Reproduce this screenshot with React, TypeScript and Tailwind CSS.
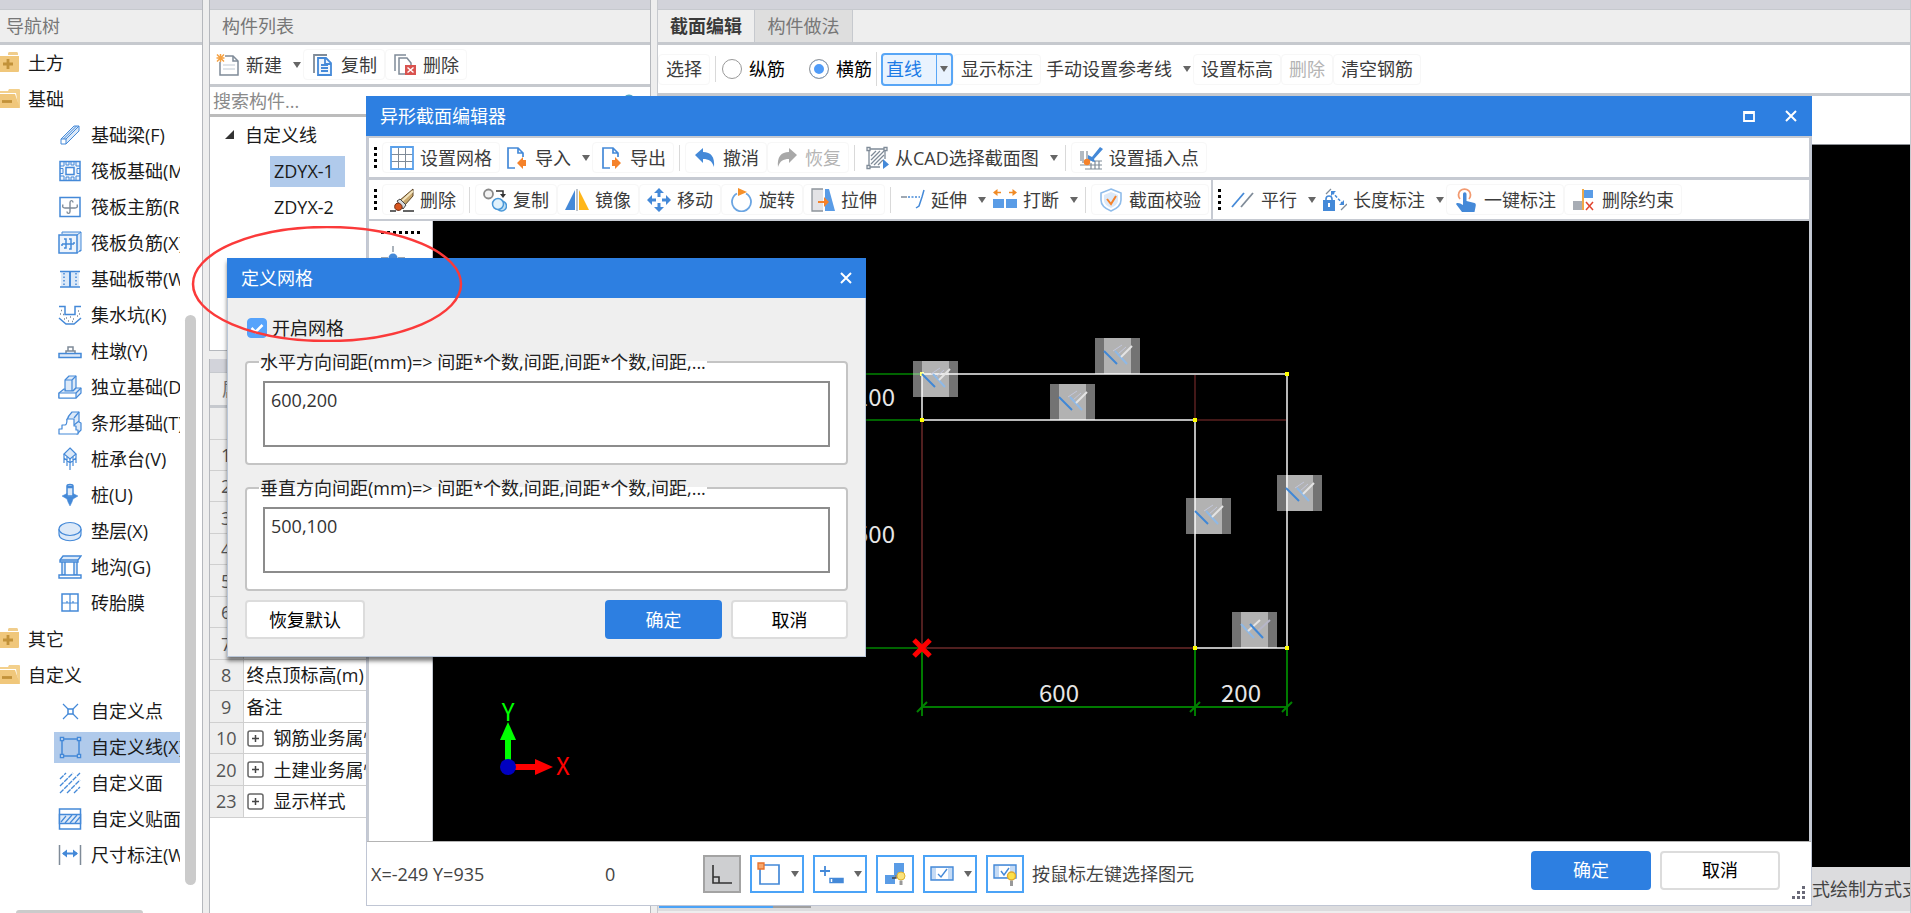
import React, { useState } from "react";
import clsx from "clsx";

const BLUE = "#4489d8";
const PALE = "#dce9f8";
const GRAY = "#7f8b98";
const ORANGE = "#f5822a";

// all drawings share a 24x24 box
const icons: Record<string, React.ReactNode> = {
  beam: (
    <g stroke={BLUE} fill={PALE} strokeLinejoin="round">
      <path d="M3 16 16 3h5v5L8 21z" />
      <path d="M3 16h5v5H3z" fill="#fff" />
      <path d="M8 16 21 3M5.500 16 18.500 3" fill="none" />
    </g>
  ),
  raft: (
    <g stroke={BLUE} fill="none" strokeWidth="1.500">
      <path d="M2 2.500h20v19H2z" fill="#eef4fc" />
      <path d="M8 8.500h8v7H8z" fill="#fff" />
      <path d="M6 3v4H2M11 3v3H8V3M16 3v3h-3V3M18 3v4h4M6 21v-4H2M11 21v-3H8v3M16 21v-3h-3v3M18 21v-4h4M2 9.500h3v5H2M22 9.500h-3v5h3" strokeWidth="1" />
    </g>
  ),
  mainBar: (
    <g fill="none">
      <path d="M2 2.500h20v19H2z" stroke={BLUE} strokeWidth="1.500" />
      <path d="M15 7.500c0-2.500-3-2.500-3 0v9c0 2.500-3 2.500-3 0M5 9.500c-1 2.500 0 3.500 2 3.500h10c2 0 3-1 2-3.500" stroke={GRAY} strokeWidth="1.400" />
    </g>
  ),
  negBar: (
    <g stroke={BLUE} fill={PALE}>
      <path d="M4 3V1h19v19h-2" />
      <path d="M1 4h18v18H1z" strokeWidth="1.500" fill="#eef4fc" />
      <path d="M19 4l4-3M19 22l4-3" />
      <path d="M6 8h2v9H6M11 8h2v10h-2M4 13h12M4 13v2M16 13v-2" fill="none" strokeWidth="1.500" />
    </g>
  ),
  strip: (
    <g stroke={BLUE} fill="none">
      <path d="M3 5h18v15H3z" fill={PALE} stroke="none" />
      <path d="M2 4.500h20M2 20h20" strokeWidth="1.500" />
      <path d="M12 4v16" strokeWidth="2" />
      <path d="M6 6v13M18 6v13" strokeDasharray="1.500 2" strokeWidth="1.500" />
    </g>
  ),
  pit: (
    <g fill="none" stroke={BLUE} strokeWidth="1.500">
      <path d="M1 3.500h6v8h10v-8h6M1 15l7 6h8l7-6" />
      <path d="M3 7.500h1M5 11.500h1M2 11h1M8 15h1M12 14h1M15 16h1M19 13h1M20 8h1M10 18h1M6 16h1M21 11h1M14 18.500h1" stroke={GRAY} />
    </g>
  ),
  pier: (
    <g fill="#fff" strokeWidth="1.500">
      <path d="M8 14v-2h2V8h5v4h2v2M10 12h5" stroke={GRAY} />
      <path d="M1 14.500h22v4H1z" stroke={BLUE} fill={PALE} />
    </g>
  ),
  footing: (
    <g stroke={BLUE} fill={PALE} strokeWidth="1.200" strokeLinejoin="round">
      <path d="M7 16V5l4-4h7v12l-3 3z" />
      <path d="M7 5h7v11M14 5l4-4" fill="none" />
      <path d="M1 18l5-4h1v2h8l3-3h5v5l-5 5H1z" />
      <path d="M1 18h17v5H1z" fill="#fff" />
      <path d="M18 18l5-5" />
    </g>
  ),
  stripFooting: (
    <g stroke={BLUE} fill={PALE} strokeWidth="1.200" strokeLinejoin="round">
      <path d="M9 9c1-4 3-6 5-8h7v10l2 1v7l-4 4z" />
      <path d="M16 7l5-6M16 14l5-4" fill="none" />
      <path d="M1 23v-5h3v-4h3c2 0 2-3 2-6h7v7h2v4h2v4z" fill="#fff" />
    </g>
  ),
  pileCap: (
    <g stroke={BLUE} fill={PALE} strokeWidth="1.200">
      <path d="M6 7v9M18 7v9M12 12v11M9 10v9M15 10v9M6 7v4l6 5 6-5V7" fill="none" />
      <path d="M12 1l6 6-6 5-6-5z" />
    </g>
  ),
  pile: (
    <g stroke={BLUE} fill={PALE} strokeWidth="1.500">
      <path d="M9 3c0-2 6-2 6 0v10H9z" />
      <path d="M9 4h6" strokeWidth="2.500" />
      <path d="M9 10.500l-5 2.500 5 3 1 3 2 4 2-4 1-3 5-3-5-2.500v3H9z" fill={BLUE} strokeWidth="0.500" />
    </g>
  ),
  cushion: (
    <g stroke={BLUE} fill={PALE} strokeWidth="1.200">
      <path d="M1 10v5c0 9 22 9 22 0v-5" />
      <ellipse cx="12" cy="10" rx="11" ry="6.500" />
    </g>
  ),
  trench: (
    <g stroke={BLUE} fill={PALE} strokeWidth="1.400">
      <path d="M4 6h3v14H4zM16 6h3v14h-3z" />
      <path d="M2 5l3-4h18l-3 4v2H2z" />
      <path d="M1 20h22v3H1zM2 5h18" fill="#fff" />
    </g>
  ),
  brick: (
    <g stroke={BLUE} fill="none" strokeWidth="1.500">
      <path d="M4 3h16v17H4z" />
      <path d="M12 3v17M4 12h16M9 12v-2M15 12v-2" strokeWidth="1.200" />
    </g>
  ),
  point: (
    <g stroke={BLUE} fill="none" strokeWidth="1.200">
      <path d="M10 10h5v5h-5z" strokeWidth="1.500" />
      <path d="M5 5l5 5M20 5l-5 5M5 20l5-5M20 20l-5-5" />
    </g>
  ),
  line: (
    <g stroke={BLUE} fill="none" strokeWidth="1.500">
      <path d="M4 4h17v17H4z" />
      <path d="M2.500 2.500h3v3h-3zM19.500 2.500h3v3h-3zM2.500 19.500h3v3h-3zM19.500 19.500h3v3h-3z" fill="#fff" />
    </g>
  ),
  face: (
    <path
      d="M2 8l6-6M2 15L15 2M2 22L22 2M9 22L22 9M16 22l6-6"
      stroke={BLUE}
      strokeWidth="1.300"
      strokeDasharray="5 1"
    />
  ),
  veneer: (
    <g stroke={BLUE} fill="none" strokeWidth="1.500">
      <path d="M1.500 2h21v20h-21z" fill="#fff" />
      <path d="M1.500 7.500h21v9h-21z" fill={PALE} />
      <path d="M3 15l5-6M7 16l7-8M12 16l7-8M17 16l5-6" strokeWidth="1.200" />
    </g>
  ),
  dimension: (
    <g fill="none">
      <path d="M1.500 2v20M22.500 2v20" stroke={GRAY} strokeWidth="1.500" />
      <path d="M5 10.500h14" stroke={BLUE} strokeWidth="2" />
      <path d="M4 10.500l5-4v8zM20 10.500l-5-4v8z" fill={BLUE} />
    </g>
  ),
  folderPlus: (
    <g>
      <path d="M12 3c0-2 1-2 2-2h6c1 0 2 0 2 2v1H12z" fill="#f0cd8c" />
      <path d="M0 5h23v15q0 1-1 1H0z" fill="#f0c77b" />
      <path d="M12 8v10M7 13h10" stroke="#c2923a" strokeWidth="2.800" />
    </g>
  ),
  folderOpen: (
    <g>
      <path d="M12 4l1-2h10q1 0 1 1v18l-2-3-2-12H3V4z" fill="#f3d08c" />
      <path d="M0 7h19l5 14H0z" fill="#f0c77b" />
      <path d="M6 14.500h10" stroke="#c2923a" strokeWidth="2.800" />
    </g>
  ),
  newFile: (
    <g fill="none">
      <path d="M4 3h13l5 5v14H4z" stroke={GRAY} strokeWidth="1.500" fill="#fff" />
      <path d="M17 3v5h5" stroke={GRAY} strokeWidth="1.500" />
      <path d="M7 12h12M7 16h12" stroke="#d5dbe2" strokeWidth="1.500" />
      <path d="M0 1h9v8H0z" fill="#fff" />
      <path d="M4.500 1v8M.500 5h8M1 1.500l7 7M8 1.500l-7 7" stroke="#f5a142" strokeWidth="1.500" />
    </g>
  ),
  copyFile: (
    <g fill="none" strokeWidth="1.800">
      <path d="M3 20V2h13" stroke={GRAY} />
      <path d="M7 5h8l5 5v12H7z" stroke={BLUE} fill="#eef5fd" />
      <path d="M14 5v6h6M10 12h7M10 15h7M10 18h7" stroke={BLUE} />
    </g>
  ),
  deleteFile: (
    <g fill="none" strokeWidth="1.500">
      <path d="M2 18V2h11" stroke={GRAY} />
      <path d="M12 21H6V5h8l4 5v2" stroke={GRAY} />
      <path d="M12 12h11v10H12z" fill="#d9534f" />
      <path d="M14.500 14.500l6 5M20.500 14.500l-6 5" stroke="#fff" />
    </g>
  ),
  grid: (
    <g fill="none">
      <path d="M8.500 1v22M15.500 1v22M1 8.500h22M1 15.500h22" stroke={GRAY} />
      <path d="M1 1h22v22H1z" stroke="#5aa0ea" strokeWidth="1.800" />
    </g>
  ),
  importFile: (
    <g>
      <path d="M10 22H3V2h10l5 5v4M13 2v5h5" fill="none" stroke={BLUE} strokeWidth="1.700" />
      <path d="M12 17l6-6v3h3v6h-3v3z" fill={ORANGE} />
    </g>
  ),
  exportFile: (
    <g>
      <path d="M10 22H3V2h10l5 5v4M13 2v5h5" fill="none" stroke={BLUE} strokeWidth="1.700" />
      <path d="M21 17l-6-6v3h-3v6h3v3z" fill={ORANGE} />
    </g>
  ),
  undo: <path d="M2 9l8-7v4c8 0 12 5 11 15-2-6-5-8-11-8v4z" fill={BLUE} />,
  redo: <path d="M22 9l-8-7v4C6 6 2 11 3 21c2-6 5-8 11-8v4z" fill="#a8a8a8" />,
  cad: (
    <g fill="none" stroke={GRAY} strokeWidth="1.300">
      <path d="M4 3h16v10M4 3v18h11" />
      <path d="M2 1.500h3v3H2zM19 1.500h3v3h-3zM2 19.500h3v3H2z" fill="#fff" />
      <path d="M6 10l5-5M6 14l9-9M6 18L19 5M9 19L19 9M13 19l5-5" />
      <path d="M18 13l6 5.500-6 4.500z" fill={BLUE} stroke="none" />
    </g>
  ),
  insertPoint: (
    <g fill="none">
      <path d="M4 5v12M8 5v8M2 5v10M1 19h22M6 23h17M12 17v6M16 15v8M20 15v8M13 15h10" stroke={GRAY} strokeWidth="1.200" />
      <path d="M9 14V9l4 2 8-10 3 2-9 10 1 3z" fill={BLUE} />
      <circle cx="8" cy="16" r="3.200" fill={ORANGE} />
    </g>
  ),
  eraser: (
    <g>
      <path d="M0 23h6M13 23h11" stroke="#333" strokeWidth="1.500" />
      <path d="M9 13L23 1v7l-9 10z" fill="#c9a86e" stroke="#5b4526" />
      <path d="M11 14L23 3" stroke="#f2e3bd" strokeWidth="2" />
      <path d="M7 13l3-2 6 6-3 4z" fill="#d5dade" stroke="#444" />
      <path d="M5 17c2-4 8-1 7 3s-9 3-7-3z" fill="#d8551f" stroke="#6a2b12" />
    </g>
  ),
  copyShape: (
    <g fill="none">
      <circle cx="5.500" cy="6" r="4.500" stroke="#8a8a8a" strokeWidth="1.800" fill="#f2f2f2" />
      <circle cx="18.500" cy="18" r="5" stroke="#4a98d8" strokeWidth="1.500" fill="#bfe0f5" />
      <circle cx="15" cy="16" r="5.500" stroke="#4a98d8" strokeWidth="1.500" fill="#e1f2fc" />
      <path d="M13 3h7v4" stroke="#333" strokeWidth="1.500" />
      <path d="M17 6h6l-3 4z" fill="#333" />
    </g>
  ),
  mirror: (
    <g>
      <path d="M10 2v20H0z" fill={BLUE} />
      <path d="M14 2v20h10z" fill="#ffb61a" />
      <path d="M12 1v22" stroke="#9aa3ad" strokeWidth="1.300" />
    </g>
  ),
  move: (
    <path
      d="M12 0l5 5h-3.500v4h-3V5H7zM12 24l5-5h-3.500v-4h-3v4H7zM0 12l5-5v3.500h4v3H5V17zM24 12l-5-5v3.500h-4v3h4V17z"
      fill={BLUE}
    />
  ),
  rotate: (
    <g>
      <path d="M17 5.500a9.500 9.500 0 1 1-9 0" fill="none" stroke="#6ba5e2" strokeWidth="1.800" />
      <path d="M9 0l9 4-9 4z" fill="#f5902a" />
    </g>
  ),
  stretch: (
    <g>
      <path d="M12 1H1v22h11" fill="#e3e3e6" stroke="#8e959c" strokeWidth="1.300" />
      <path d="M14 1h4l6 22H14z" fill="#5a9ce6" />
      <path d="M7 14h8" stroke={ORANGE} strokeWidth="2" />
      <path d="M13 9l5 5-5 5z" fill={ORANGE} />
    </g>
  ),
  extend: (
    <g fill="none" stroke={BLUE} strokeWidth="1.500">
      <path d="M0 9h6" stroke={GRAY} />
      <path d="M7 9h12" strokeDasharray="2 1.500" />
      <path d="M23 2l-2 7-3 9-3 2" />
    </g>
  ),
  breakLine: (
    <g>
      <path d="M0 11h11v9H0zM13 11h11v9H13z" fill="#5a9ce6" />
      <path d="M3 4.500h5M16 4.500h5" stroke="#f08a24" strokeWidth="1.700" />
      <path d="M0 4.500L4.500 1v7zM24 4.500L19.500 1v7z" fill="#f08a24" />
    </g>
  ),
  shield: (
    <g fill="none">
      <path d="M12 1l10 4v7c0 6-5 9-10 11C7 21 2 18 2 12V5z" stroke="#8fbcea" strokeWidth="1.600" />
      <path d="M12 4l7 3v5c0 4-3 6-7 8-4-2-7-4-7-8V7z" fill={PALE} />
      <path d="M8 11l4 5 5-8" stroke={ORANGE} strokeWidth="2" />
    </g>
  ),
  parallel: (
    <g strokeWidth="1.800">
      <path d="M1 19L13 5" stroke={BLUE} />
      <path d="M10 19L22 5" stroke={GRAY} />
    </g>
  ),
  lengthMark: (
    <g fill="none">
      <path d="M3 6l5-5M18 22l6-6" stroke={GRAY} strokeWidth="1.300" />
      <path d="M9 4l11 12" stroke={BLUE} strokeDasharray="3 1.500" strokeWidth="1.500" />
      <path d="M8 3h5l-5 5zM21 17h-5l5-5z" fill={BLUE} />
      <path d="M3 13v-2a3 3 0 0 1 6 0v2" stroke={BLUE} strokeWidth="1.600" />
      <path d="M0 12h12v11H0z" fill={BLUE} />
      <path d="M6 15v4" stroke="#fff" strokeWidth="2" />
    </g>
  ),
  touch: (
    <g>
      <path d="M6 11a6 6 0 1 1 9 0" fill="none" stroke="#f29a70" strokeWidth="1.800" />
      <path d="M9 6a1.700 1.700 0 0 1 3.500 0v7l8 2c1.500.500 1.500 2 1 4l-1 5H8l-6-8c1-2 4-1 7 1z" fill={BLUE} />
    </g>
  ),
  removeLimit: (
    <g fill="none">
      <path d="M1 13h9v9H1z" fill="#a8adb5" />
      <path d="M12 2h9v8h-9z" fill="#5a9ce6" />
      <path d="M11 1v21" stroke="#f0a034" strokeWidth="1.800" />
      <path d="M14 14l7 8M21 14l-7 8" stroke="#e2452f" strokeWidth="1.500" />
    </g>
  ),
  node: (
    <g fill="none" stroke={GRAY} strokeWidth="1.300">
      <path d="M12 0v6M0 12h7M17 12h7M12 18v6" />
      <circle cx="12" cy="12" r="4.500" fill={BLUE} stroke="none" />
    </g>
  ),
  ortho: (
    <g fill="none" stroke="#333" strokeWidth="1.600">
      <path d="M3 3v18h19" />
      <path d="M3 15h6v6" />
    </g>
  ),
  snap: (
    <g fill="none">
      <path d="M3 3h19v19H3z" stroke={BLUE} strokeWidth="1.700" />
      <path d="M1 1h6v6H1z" fill="#f6a76c" stroke="#e8702a" strokeWidth="1.300" />
    </g>
  ),
  dynamic: (
    <g fill="none" stroke={BLUE}>
      <path d="M5 4v10M0 9h10" strokeWidth="1.800" />
      <path d="M10 16.500h13v4H10z" fill={BLUE} strokeWidth="1.500" />
      <path d="M11.500 17v3" stroke="#fff" strokeWidth="1.500" />
    </g>
  ),
  hintShape: (
    <g>
      <path d="M11 1h10v12H11zM2 13h10v9H2z" fill="#5a9ce6" />
      <path d="M9 16h4v-3" fill="none" stroke="#444" strokeWidth="1.300" />
      <circle cx="18" cy="14" r="4" fill="#fbe27a" stroke="#e0b32e" />
      <path d="M16.500 18.500h3V23h-3z" fill="#999" />
    </g>
  ),
  constraint: (
    <g fill="none" stroke={BLUE} strokeWidth="1.400">
      <path d="M1 5h22v13H1z" fill="#c5dbf5" />
      <path d="M6 6h12v11H6z" fill="#fff" stroke="none" />
      <path d="M8 12l3 3 6-8" />
    </g>
  ),
  hintConstraint: (
    <g fill="none" stroke={BLUE} strokeWidth="1.400">
      <path d="M1 3h22v13H1z" fill="#c5dbf5" />
      <path d="M6 4h11v11H6z" fill="#fff" stroke="none" />
      <path d="M8 9l3 4 5-7" />
      <circle cx="18.500" cy="14" r="4" fill="#fbe04a" stroke="#e0a92e" />
      <path d="M17 18.500h3V24h-3z" fill="#999" stroke="none" />
    </g>
  ),
};

const Icon = ({ name, className }: { name: string; className?: string }) => (
  <svg viewBox="0 0 24 24" className={clsx("h-6 w-6 shrink-0", className)} aria-hidden="true">
    {icons[name]}
  </svg>
);

const Caret = ({ className }: { className?: string }) => (
  <svg viewBox="0 0 10 6" className={clsx("h-[6px] w-[10px] shrink-0", className)} aria-hidden="true">
    <path d="M1 0h8L5 6z" fill="#666" />
  </svg>
);

interface ToolProps {
  icon?: string;
  label: string;
  menu?: boolean;
  disabled?: boolean;
}

const Tool = ({ icon, label, menu, disabled }: ToolProps) => (
  <button
    disabled={disabled}
    className={clsx(
      "flex h-[31px] shrink-0 items-center whitespace-nowrap rounded border",
      menu ? "border-transparent pl-1" : "border-[#f7f7f7] px-[7px]",
      disabled ? "text-[#b4b4b4]" : "text-[#3c3c3c]",
    )}
  >
    {icon && <Icon name={icon} className="mr-[6px]" />}
    {label}
    {menu && <Caret className="ml-[10px]" />}
  </button>
);

const Divider = () => <span className="mx-[5px] h-[26px] w-px shrink-0 bg-[#d9d9d9]" />;

const Grip = () => (
  <span className="mx-[5px] grid shrink-0 gap-[3px]">
    {[0, 1, 2, 3].map((i) => (
      <span key={i} className="h-[3px] w-[3px] bg-black" />
    ))}
  </span>
);

const PanelTop = ({ children }: { children: React.ReactNode }) => (
  <header className="shrink-0">
    <div className="h-[9px] bg-[#d2d3da]" />
    <div className="flex h-9 items-stretch border-t border-b-[3px] border-[#c6c9ce] bg-[#eee] text-[#777]">
      {children}
    </div>
  </header>
);

interface TreeItem {
  label: string;
  icon: string;
  group?: boolean;
}

const navTree: TreeItem[] = [
  { label: "土方", icon: "folderPlus", group: true },
  { label: "基础", icon: "folderOpen", group: true },
  { label: "基础梁(F)", icon: "beam" },
  { label: "筏板基础(M)", icon: "raft" },
  { label: "筏板主筋(R)", icon: "mainBar" },
  { label: "筏板负筋(X)", icon: "negBar" },
  { label: "基础板带(W)", icon: "strip" },
  { label: "集水坑(K)", icon: "pit" },
  { label: "柱墩(Y)", icon: "pier" },
  { label: "独立基础(D)", icon: "footing" },
  { label: "条形基础(T)", icon: "stripFooting" },
  { label: "桩承台(V)", icon: "pileCap" },
  { label: "桩(U)", icon: "pile" },
  { label: "垫层(X)", icon: "cushion" },
  { label: "地沟(G)", icon: "trench" },
  { label: "砖胎膜", icon: "brick" },
  { label: "其它", icon: "folderPlus", group: true },
  { label: "自定义", icon: "folderOpen", group: true },
  { label: "自定义点", icon: "point" },
  { label: "自定义线(X)", icon: "line" },
  { label: "自定义面", icon: "face" },
  { label: "自定义贴面", icon: "veneer" },
  { label: "尺寸标注(W)", icon: "dimension" },
];

const NavPanel = () => {
  const [selected, setSelected] = useState("自定义线(X)");

  return (
    <nav className="flex w-[203px] shrink-0 flex-col border-r border-[#b5b8bd] bg-white">
      <PanelTop>
        <h2 className="flex items-center pl-[6px]">导航树</h2>
      </PanelTop>
      <div className="flex min-h-0 flex-1">
        <ul className="w-[180px] shrink-0 overflow-hidden text-[#1a1a1a]">
          {navTree.map((item) => (
            <li key={item.label} className={clsx("flex h-9 items-center", !item.group && "pl-[54px]")}>
              <button
                onClick={() => setSelected(item.label)}
                className={clsx(
                  "flex h-[31px] flex-1 items-center whitespace-nowrap",
                  item.group ? "-ml-1 gap-2" : "gap-[9px] pl-1",
                  selected === item.label && "bg-[#b0caeb]",
                )}
              >
                <Icon name={item.icon} />
                {item.label}
              </button>
            </li>
          ))}
        </ul>
        <span className="mt-[270px] ml-[5px] h-[570px] w-[11px] rounded-full bg-[#cbcbcb]" />
      </div>
      <span className="ml-4 h-[3px] w-[127px] shrink-0 rounded-t bg-[#cbcbcb]" />
    </nav>
  );
};

const properties = [
  { id: 1, name: "" },
  { id: 2, name: "" },
  { id: 3, name: "" },
  { id: 4, name: "" },
  { id: 5, name: "" },
  { id: 6, name: "" },
  { id: 7, name: "" },
  { id: 8, name: "终点顶标高(m)" },
  { id: 9, name: "备注" },
  { id: 10, name: "钢筋业务属性", group: true },
  { id: 20, name: "土建业务属性", group: true },
  { id: 23, name: "显示样式", group: true },
];

const ComponentPanel = () => (
  <div className="flex w-[442px] shrink-0 flex-col">
    <section className="flex shrink-0 flex-col border-x border-b border-[#b5b8bd] bg-white">
      <PanelTop>
        <h2 className="flex items-center pl-[12px]">构件列表</h2>
      </PanelTop>
      <div className="flex h-[42px] items-center border-b-[3px] border-[#c6c9ce] pl-px">
        <Tool icon="newFile" label="新建" menu />
        <Tool icon="copyFile" label="复制" />
        <Tool icon="deleteFile" label="删除" />
      </div>
      <div className="flex h-[30px] items-center border-b-[3px] border-[#bcbcbc] pr-[14px]">
        <input
          aria-label="搜索构件"
          placeholder="搜索构件..."
          className="min-w-0 flex-1 pl-[3px] outline-none placeholder:text-[#8a8a8a]"
        />
        <svg viewBox="0 0 14 14" className="h-[14px] w-[14px]" aria-hidden="true">
          <circle cx="7" cy="7" r="5.500" fill="none" stroke="#4aa3c9" strokeWidth="2" />
        </svg>
      </div>
      <ul className="h-[233px] text-[#1a1a1a]">
        <li className="flex h-9 items-center pl-[15px]">
          <svg viewBox="0 0 10 10" className="mr-[10px] h-[10px] w-[10px]" aria-hidden="true">
            <path d="M9 0v9H0z" fill="#333" />
          </svg>
          自定义线
        </li>
        <li className="flex h-9 items-center pl-[60px]">
          <button className="h-[31px] w-[75px] bg-[#b0caeb] pl-1 text-left">ZDYX-1</button>
        </li>
        <li className="flex h-9 items-center pl-[60px]">
          <button className="h-[31px] w-[75px] pl-1 text-left">ZDYX-2</button>
        </li>
      </ul>
    </section>

    <section className="mt-2 flex-1 border-x border-[#b5b8bd] bg-white">
      <div className="h-[13px] bg-[#d2d3da]" />
      <h2 className="flex h-9 items-center border-t border-b-[3px] border-[#c6c9ce] bg-[#eee] pl-[12px] text-[#777]">
        属性列表
      </h2>
      <table className="w-full table-fixed border-collapse">
        <thead>
          <tr className="h-[31px] bg-[#eee]">
            <th className="w-[33px] border-r border-b border-[#cfcfcf]" />
            <th className="border-b border-[#cfcfcf]" />
          </tr>
        </thead>
      </table>
      <table className="h-[378px] w-full table-fixed border-collapse">
        <tbody>
          {properties.map((row) => (
            <tr key={row.id}>
              <td className="w-[33px] border-r border-b border-[#cfcfcf] bg-[#eee] p-0 text-center text-[#555]">
                {row.id}
              </td>
              <td className="overflow-hidden border-b border-[#cfcfcf] p-0 pl-[3px] text-[#1a1a1a]">
                <span className="flex items-center whitespace-nowrap">
                  {row.group && (
                    <svg viewBox="0 0 17 17" className="mr-[10px] h-[17px] w-[17px]" aria-hidden="true">
                      <rect x="1" y="1" width="15" height="15" rx="2" fill="#fff" stroke="#666" strokeWidth="1.500" />
                      <path d="M8.500 5v7M5 8.500h7" stroke="#444" strokeWidth="1.500" />
                    </svg>
                  )}
                  {row.name}
                </span>
              </td>
            </tr>
          ))}
        </tbody>
      </table>
    </section>
  </div>
);

const SectionPanel = () => {
  const [bar, setBar] = useState("横筋");

  return (
    <section className="flex min-w-0 flex-1 flex-col border-x border-[#c6c9ce] bg-white">
      <PanelTop>
        <button className="w-[97px] border-r border-[#c6c9ce] font-semibold text-[#3a3a3a]">截面编辑</button>
        <button className="w-[98px] border-r border-[#c6c9ce] bg-[#dedede]">构件做法</button>
      </PanelTop>
      <div className="flex h-[51px] shrink-0 items-center border-b-[3px] border-[#c6c9ce]">
        <Tool label="选择" />
        <Divider />
        <div className="flex items-center gap-6 pl-px text-black">
          {["纵筋", "横筋"].map((name) => (
            <label key={name} className="flex items-center gap-[7px]">
              <input
                type="radio"
                name="bar"
                checked={bar === name}
                onChange={() => setBar(name)}
                className="h-5 w-5 appearance-none rounded-full border border-[#999] bg-white checked:bg-[#4f9bf8] checked:shadow-[inset_0_0_0_4px_white]"
              />
              {name}
            </label>
          ))}
        </div>
        <span className="mx-1 h-[34px] w-px bg-[#d9d9d9]" />
        <div className="flex h-[33px] shrink-0 overflow-hidden rounded border-2 border-[#58a6f6] bg-[#e9f3fe]">
          <button className="w-[54px] border-r border-[#58a6f6] pl-[3px] text-left text-[#1c7be6]">直线</button>
          <button aria-label="直线选项" className="flex w-[14px] items-center justify-center">
            <Caret />
          </button>
        </div>
        <Tool label="显示标注" />
        <Tool label="手动设置参考线" menu />
        <Tool label="设置标高" />
        <Tool label="删除" disabled />
        <Tool label="清空钢筋" />
      </div>
      <div className="h-[49px] shrink-0 border-b border-[#8d9096]" />
      <div className="flex-1 bg-black" />
      <footer className="flex h-[46px] shrink-0 items-center border-b-2 border-[#eee] bg-[#dcdcde] pl-px">
        {[0, 1, 2].map((i) => (
          <span key={i} className="h-[38px] w-[38px] border-2 border-[#4ba3f7] bg-white" />
        ))}
        <span className="h-[38px] w-[38px] border-2 border-[#a0a0a0] bg-[#cfcfd1]" />
        <p className="ml-auto w-[98px] overflow-hidden whitespace-nowrap text-[#444]">式绘制方式支</p>
      </footer>
    </section>
  );
};

const marks = [
  [1095, 338],
  [913, 361],
  [1050, 384],
  [1186, 498],
  [1277, 475],
];

const Mark = ({ x, y, children }: { x: number; y: number; children: React.ReactNode }) => (
  <g transform={`translate(${x} ${y})`} fill="none">
    <rect width="45" height="36" fill="#fff" fillOpacity="0.45" />
    <rect x="9" width="27" height="36" fill="#fff" fillOpacity="0.45" />
    {children}
  </g>
);

const Drawing = () => (
  <svg className="h-full w-full bg-black" role="img" aria-label="截面">
    <g transform="translate(-433 -221)" fill="none">
      <g stroke="#008000" strokeWidth="2">
        <path d="M840 374h82M840 420h82M840 648h82" stroke="#006400" />
        <path d="M922 648v68M1195 648v68M1287 648v68M922 707h365" stroke="#007a00" />
        <path d="M917 712l10-10M1190 712l10-10M1282 712l10-10" />
      </g>
      <path d="M922 420v228h273" stroke="#6b2a2a" strokeWidth="1.500" />
      <path d="M1195 374v46h92" stroke="#5a2020" strokeWidth="1.500" />
      <path d="M922 420V374h365v274h-92V420H922z" stroke="#b8b8b8" strokeWidth="2" />
      {[
        [922, 374],
        [1287, 374],
        [922, 420],
        [1195, 420],
        [1195, 648],
        [1287, 648],
      ].map(([x, y]) => (
        <rect key={`${x}-${y}`} x={x - 2} y={y - 2} width="4" height="4" fill="#ffff00" />
      ))}
      {marks.map(([x, y]) => (
        <Mark key={`${x}-${y}`} x={x} y={y}>
          <path d="M18 13l9-6M22 17l9-8" stroke="#c3c7dc" />
          <path d="M9 13l13 13" stroke="#3f87d6" strokeWidth="2" />
          <path d="M20 13l12 13" stroke="#8fb9e6" strokeWidth="2" />
          <path d="M26 19L37 8" stroke="#e4e4e4" strokeWidth="2" />
        </Mark>
      ))}
      <Mark x={1232} y={612}>
        <path d="M9 12l13 14" stroke="#8fb9e6" strokeWidth="2" />
        <path d="M16 19L28 8" stroke="#e4e4e4" strokeWidth="2" />
        <path d="M26 19L38 8" stroke="#b6b6c8" strokeWidth="2" />
        <path d="M18 12l13 14" stroke="#3f87d6" strokeWidth="2" />
      </Mark>
      <path d="M914 640l16 16M930 640l-16 16" stroke="#ff0000" strokeWidth="5" />
      <g fill="#e6e6e6" className="font-['Noto_Sans_CJK_SC',sans-serif] text-2xl">
        <text x="895" y="406" textAnchor="end">100</text>
        <text x="895" y="543" textAnchor="end">500</text>
        <text x="1059" y="702" textAnchor="middle">600</text>
        <text x="1241" y="702" textAnchor="middle">200</text>
      </g>
      <path d="M508 760V738" stroke="#00ff00" strokeWidth="6" />
      <path d="M508 722l8 18h-16z" fill="#00ff00" />
      <path d="M514 767h23" stroke="#ff0000" strokeWidth="6" />
      <path d="M553 767l-18 8v-16z" fill="#ff0000" />
      <circle cx="508" cy="767" r="8" fill="#0000c0" />
      <g className="font-['Noto_Sans_CJK_SC',sans-serif] text-2xl" textAnchor="middle">
        <text x="508" y="721" fill="#00ff00">Y</text>
        <text x="563" y="775" fill="#ff0000">X</text>
      </g>
    </g>
  </svg>
);

const StatusTool = ({ icon, label, menu, active }: { icon: string; label: string; menu?: boolean; active?: boolean }) => (
  <button
    aria-label={label}
    className={clsx(
      "flex h-[38px] shrink-0 items-center border-2 pl-[5px]",
      menu ? "w-[54px] gap-[9px]" : "w-[38px]",
      active ? "border-[#a3a3a3] bg-[#cecfd1]" : "border-[#4ba3f7] bg-white",
    )}
  >
    <Icon name={icon} />
    {menu && <Caret />}
  </button>
);

const SectionEditor = () => (
  <section className="absolute top-24 right-[99px] bottom-[7px] left-[366px] flex flex-col border border-[#c0c6d4] bg-white">
    <header className="-mx-px -mt-px flex h-10 shrink-0 items-center bg-[#2d7fe1] pr-[15px] pl-[14px] text-white">
      <h1 className="flex-1">异形截面编辑器</h1>
      <button aria-label="最大化" className="mr-[30px]">
        <svg viewBox="0 0 12 11" className="h-[11px] w-3" aria-hidden="true">
          <path d="M1 1h10v9H1zM1 2h10" fill="none" stroke="#fff" strokeWidth="1.800" />
        </svg>
      </button>
      <button aria-label="关闭">
        <svg viewBox="0 0 12 12" className="h-3 w-3" aria-hidden="true">
          <path d="M1 1l10 10M11 1L1 11" stroke="#fff" strokeWidth="2" />
        </svg>
      </button>
    </header>

    <div className="flex min-h-0 flex-1 flex-col border-x-2 border-t-2 border-[#c6cad2]">
      <div className="flex h-[42px] shrink-0 items-center border-b-[3px] border-[#c6cad2]">
        <Grip />
        <Tool icon="grid" label="设置网格" />
        <Tool icon="importFile" label="导入" menu />
        <Tool icon="exportFile" label="导出" />
        <Divider />
        <Tool icon="undo" label="撤消" />
        <Tool icon="redo" label="恢复" disabled />
        <Divider />
        <Tool icon="cad" label="从CAD选择截面图" menu />
        <Divider />
        <Tool icon="insertPoint" label="设置插入点" />
      </div>
      <div className="flex h-[41px] shrink-0 items-center border-b-2 border-[#c6cad2]">
        <Grip />
        <Tool icon="eraser" label="删除" />
        <Divider />
        <Tool icon="copyShape" label="复制" />
        <Tool icon="mirror" label="镜像" />
        <Tool icon="move" label="移动" />
        <Tool icon="rotate" label="旋转" />
        <Tool icon="stretch" label="拉伸" />
        <Divider />
        <Tool icon="extend" label="延伸" menu />
        <Tool icon="breakLine" label="打断" menu />
        <Divider />
        <Tool icon="shield" label="截面校验" />
        <span className="ml-0.5 w-[2px] self-stretch bg-[#c6cad2]" />
        <Grip />
        <Tool icon="parallel" label="平行" menu />
        <Tool icon="lengthMark" label="长度标注" menu />
        <Tool icon="touch" label="一键标注" />
        <Tool icon="removeLimit" label="删除约束" />
      </div>
      <div className="flex min-h-0 flex-1">
        <aside className="flex w-16 shrink-0 flex-col items-center border-r border-[#c6cad2] pt-[10px]">
          <div className="flex gap-[3px]">
            {[0, 1, 2, 3, 4, 5, 6].map((i) => (
              <span key={i} className="h-[3px] w-[3px] bg-black" />
            ))}
          </div>
          <button aria-label="点" className="mt-[12px] mr-4">
            <Icon name="node" />
          </button>
        </aside>
        <div className="min-w-0 flex-1">
          <Drawing />
        </div>
      </div>
    </div>

    <footer className="flex h-16 shrink-0 items-center border-t border-[#b4b4b4] pr-[31px] pl-1 text-[#444]">
      <span className="w-[234px]">X=-249 Y=935</span>
      <span className="w-[98px]">0</span>
      <div className="flex gap-[9px]">
        <StatusTool icon="ortho" label="正交" active />
        <StatusTool icon="snap" label="对象捕捉" menu />
        <StatusTool icon="dynamic" label="动态输入" menu />
        <StatusTool icon="hintShape" label="图元提示" />
        <StatusTool icon="constraint" label="约束" menu />
        <StatusTool icon="hintConstraint" label="约束提示" />
      </div>
      <span className="ml-2 flex-1">按鼠标左键选择图元</span>
      <div className="mb-[7px] flex gap-[9px]">
        <button className="h-[39px] w-[120px] rounded bg-[#2d7fe1] text-white">确定</button>
        <button className="h-[39px] w-[120px] rounded border-2 border-[#dcdcdc] bg-white text-black">取消</button>
      </div>
    </footer>
    <svg viewBox="0 0 13 13" className="absolute right-[6px] bottom-[6px] h-[13px] w-[13px]" aria-hidden="true">
      <path d="M0 10h3v3H0zM5 10h3v3H5zM10 10h3v3h-3zM5 5h3v3H5zM10 5h3v3h-3zM10 0h3v3h-3z" fill="#6a6a78" />
    </svg>
  </section>
);

interface SpacingFieldProps {
  title: string;
  value: string;
  onChange: (value: string) => void;
}

const SpacingField = ({ title, value, onChange }: SpacingFieldProps) => (
  <fieldset className="rounded border-2 border-[#c4c4c4] bg-white px-4 pb-4">
    <legend className="-ml-1 h-6 px-px leading-6 whitespace-nowrap text-[#222]">
      {title}方向间距(mm)=&gt; 间距*个数,间距,间距*个数,间距,...
    </legend>
    <textarea
      aria-label={`${title}方向间距`}
      value={value}
      onChange={(e) => onChange(e.target.value)}
      className="mt-[7px] block h-[66px] w-full resize-none border-2 border-[#8c8c8c] bg-white px-[6px] py-[5px] leading-6 text-[#333] outline-none"
    />
  </fieldset>
);

const GridDialog = () => {
  const [enabled, setEnabled] = useState(true);
  const [horizontal, setHorizontal] = useState("600,200");
  const [vertical, setVertical] = useState("500,100");

  return (
    <section className="absolute top-[258px] left-[227px] w-[639px] border border-[#b9c6d8] bg-[#efefef] shadow-[0_4px_4px_rgba(0,0,0,0.5)]">
      <header className="-mx-px -mt-px flex h-10 items-center justify-between bg-[#2d7fe1] px-[14px] text-white">
        <h2>定义网格</h2>
        <button aria-label="关闭">
          <svg viewBox="0 0 12 12" className="h-3 w-3" aria-hidden="true">
            <path d="M1 1l10 10M11 1L1 11" stroke="#fff" strokeWidth="2" />
          </svg>
        </button>
      </header>
      <div className="px-[17px] pt-4 pb-[17px]">
        <label className="relative flex h-[27px] items-center gap-[5px] pl-[2px] text-[#1a1a1a]">
          <input
            type="checkbox"
            checked={enabled}
            onChange={(e) => setEnabled(e.target.checked)}
            className="h-5 w-5 appearance-none rounded-sm border border-[#56a3fb] bg-white checked:bg-[#56a3fb]"
          />
          {enabled && (
            <svg viewBox="0 0 20 20" className="absolute left-[2px] h-5 w-5" aria-hidden="true">
              <path d="M4.500 10l4 4 7-7" fill="none" stroke="#fff" strokeWidth="2.500" />
            </svg>
          )}
          开启网格
        </label>
        <div className="mt-[9px] grid gap-[11px]">
          <SpacingField title="水平" value={horizontal} onChange={setHorizontal} />
          <SpacingField title="垂直" value={vertical} onChange={setVertical} />
        </div>
        <div className="mt-[9px] flex gap-[9px] text-black">
          <button className="mr-auto h-[39px] w-[120px] rounded border-2 border-[#dcdcdc] bg-white">恢复默认</button>
          <button className="h-[39px] w-[117px] rounded bg-[#2d7fe1] text-white">确定</button>
          <button className="h-[39px] w-[117px] rounded border-2 border-[#dcdcdc] bg-white">取消</button>
        </div>
      </div>
    </section>
  );
};

export default function App() {
  return (
    <main className="relative flex h-screen overflow-hidden bg-[#eee] font-['Open_Sans','Noto_Sans_CJK_SC',sans-serif] text-lg leading-6">
      <NavPanel />
      <span className="w-[6px] shrink-0" />
      <ComponentPanel />
      <span className="w-[6px] shrink-0" />
      <SectionPanel />
      <SectionEditor />
      <GridDialog />
      {/* hand-drawn highlight over the dialog title */}
      <svg
        viewBox="0 0 272 116"
        className="pointer-events-none absolute top-[226px] left-[191px] h-[116px] w-[272px]"
        aria-hidden="true"
      >
        <ellipse cx="136" cy="58" rx="134" ry="57" fill="none" stroke="#fb3a3a" strokeWidth="2.500" />
      </svg>
    </main>
  );
}
